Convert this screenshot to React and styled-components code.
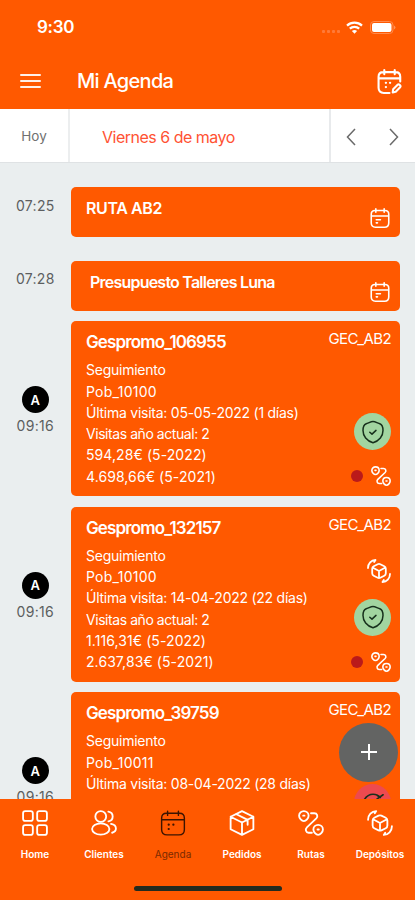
import React from "react";
import styled, { createGlobalStyle } from "styled-components";

const ORANGE = "#ff5900";

const visits = [
  {
    name: "Gespromo_106955",
    town: "Pob_10100",
    lastVisit: "Última visita: 05-05-2022 (1 días)",
    visitCount: "Visitas año actual: 2",
    amounts: ["594,28€ (5-2022)", "4.698,66€ (5-2021)"],
  },
  {
    name: "Gespromo_132157",
    town: "Pob_10100",
    lastVisit: "Última visita: 14-04-2022 (22 días)",
    visitCount: "Visitas año actual: 2",
    amounts: ["1.116,31€ (5-2022)", "2.637,83€ (5-2021)"],
    depot: true,
  },
  {
    name: "Gespromo_39759",
    town: "Pob_10011",
    lastVisit: "Última visita: 08-04-2022 (28 días)",
    amounts: [],
    late: true,
  },
];

const Icon = ({ size = 24, width = 1.5, children }) => (
  <svg
    width={size}
    height={size}
    viewBox="0 0 24 24"
    fill="none"
    stroke="currentColor"
    strokeWidth={width}
    strokeLinecap="round"
    strokeLinejoin="round"
  >
    {children}
  </svg>
);

const HomeIcon = (props) => (
  <Icon {...props}>
    <rect x="1" y="1" width="9" height="9" rx="2" />
    <rect x="14" y="1" width="9" height="9" rx="2" />
    <rect x="1" y="14" width="9" height="9" rx="2" />
    <rect x="14" y="14" width="9" height="9" rx="2" />
  </Icon>
);

const ClientsIcon = (props) => (
  <Icon {...props}>
    <circle cx="9" cy="6" r="5" />
    <ellipse cx="9" cy="17.5" rx="8" ry="5.2" />
    <path d="M16 1.500c2.400.4 4 2.200 4 4.500s-1.600 4.100-3.900 4.500M18.500 12.800c2.800.5 4.500 2 4.500 4.200 0 1.900-1.300 3.300-3.500 4" />
  </Icon>
);

const CalendarIcon = (props) => (
  <Icon {...props}>
    <path d="M7 1v4M17 1v4M6 3h12c2.800 0 4.500 1.800 4.500 4.500V18c0 3-1.700 5-5 5h-11c-3.300 0-5-2-5-5V7.500C1.500 4.800 3.200 3 6 3ZM1.800 9h20.400" />
    <path d="M8 13.500h.1M12.300 13.500h.1M8 17.500h.1" strokeWidth="2" />
  </Icon>
);

const SmallCalendarIcon = (props) => (
  <Icon {...props}>
    <path d="M7 1v4M17 1v4M6 3h12c2.800 0 4.500 1.800 4.500 4.500V18c0 3-1.700 5-5 5h-11c-3.300 0-5-2-5-5V7.500C1.500 4.800 3.200 3 6 3ZM1.800 9.500h20.400" />
    <path d="M7.500 14h5M7.500 17.800h1.500" />
  </Icon>
);

const CalendarEditIcon = (props) => (
  <Icon {...props}>
    <path d="M7 1v4M17 1v4M12 23H6.500c-3.300 0-5-2-5-5V7.500C1.500 4.800 3.200 3 6 3h12c2.800 0 4.300 1.800 4.300 4.500V12M1.800 9h20.400" />
    <path d="M8.500 13.300h.1M12.500 13.300h.1M8.500 17.300h.1" strokeWidth="2.2" />
    <path d="m15.500 19.500 4.300-4.300c1.200-1.200 3.600 1 2.400 2.300L18 21.800l-2.900.7.400-3Z" />
  </Icon>
);

const BoxIcon = (props) => (
  <Icon {...props}>
    <path d="M12 1 22.500 6.200v11.600L12 23 1.500 17.800V6.200L12 1ZM1.500 6.200 12 11.500l10.500-5.300M12 11.500V23M6.500 3.700l10.700 5.400v4.500" />
  </Icon>
);

const RouteIcon = (props) => (
  <Icon {...props}>
    <path d="M5.400 10.200C3.500 10.200 1 7.600 1 5.300 1 2.700 3 1 5.400 1s4.400 1.700 4.400 4.300c0 2.300-2.500 4.900-4.400 4.900ZM18.600 23c-1.900 0-4.400-2.600-4.400-4.900 0-2.600 2-4.300 4.400-4.300s4.400 1.700 4.400 4.300c0 2.300-2.500 4.900-4.400 4.900Z" />
    <path d="M4.800 5.200h1.200M18 18h1.200" />
    <path d="M12 3h3c2.800 0 3.700 3 1.900 4.800L8.200 16c-1.800 1.800-.9 5 1.600 5h3" />
  </Icon>
);

const DepotIcon = (props) => (
  <Icon {...props}>
    <path d="M10.700 5.200c.9-.4 1.700-.4 2.600 0l4 2c1 .5 1.500 1.400 1.500 2.500v4.600c0 1.100-.5 2-1.500 2.500l-4 2c-.9.4-1.700.4-2.600 0l-4-2c-1-.5-1.500-1.400-1.500-2.500V9.700c0-1.100.5-2 1.500-2.500l4-2ZM6 8.800l6 3.200 6-3.200M12 12v6.800" />
    <path d="M1 9C1 4.500 4.200 1.200 8.500 1L7.200 3M23 15c0 4.500-3.200 7.800-7.500 8l1.300-2" />
  </Icon>
);

const ShieldIcon = (props) => (
  <Icon {...props}>
    <path d="M12 1.500c1.800 0 4.500 1.500 6.800 2.300C21 4.700 22 7 22 10.500c0 5.500-3.700 10.500-10 12.200C5.700 21 2 16 2 10.500c0-3.500 1-5.800 3.200-6.700C7.500 3 10.200 1.500 12 1.500Z" />
    <path d="m8.800 12.200 2.200 1.900 4-3.700" />
  </Icon>
);

const LateIcon = (props) => (
  <Icon {...props}>
    <path d="M2.500 8.500C5 4.200 8 2.500 12 2.500c3.500 0 6.200 1.200 8 3.500M12 8.500v5M16.500 7.500 23 3M16.500 3.500 20 6" />
    <path d="M2.500 8.500a10 10 0 1 0 19 0" />
  </Icon>
);

const tabs = [
  { label: "Home", icon: HomeIcon },
  { label: "Clientes", icon: ClientsIcon },
  { label: "Agenda", icon: CalendarIcon, active: true },
  { label: "Pedidos", icon: BoxIcon },
  { label: "Rutas", icon: RouteIcon },
  { label: "Depósitos", icon: DepotIcon },
];

const App = () => {
  return (
    <>
      <GlobalStyle />
      <Screen>
        <StatusBar>
          <Clock>9:30</Clock>
          <StatusIcons>
            <Signal>
              <i />
              <i />
              <i />
              <i />
            </Signal>
            <svg width="17" height="13" viewBox="0 0 17 13" fill="none">
              <path
                d="M1 4.600a11 11 0 0 1 15 0M3.800 7.600a7 7 0 0 1 9.400 0"
                stroke="#fff"
                strokeWidth="2.200"
              />
              <path d="M5.900 10a4 4 0 0 1 5.200 0L8.500 12.800Z" fill="#fff" />
            </svg>
            <svg width="26" height="13" viewBox="0 0 26 13">
              <rect
                x="0.500"
                y="0.500"
                width="22.500"
                height="12"
                rx="3.500"
                fill="none"
                stroke="#ff8a4d"
              />
              <rect x="2" y="2" width="19.500" height="9" rx="2" fill="#fff" />
              <path d="M24.300 4.500q2 2 0 4z" fill="#ffac80" />
            </svg>
          </StatusIcons>
        </StatusBar>

        <Header>
          <Burger>
            <i />
            <i />
            <i />
          </Burger>
          <Title>Mi Agenda</Title>
          <CalendarEditIcon size={25} width={2} />
        </Header>

        <DateBar>
          <Today>Hoy</Today>
          <CurrentDate>Viernes 6 de mayo</CurrentDate>
          <Arrows>
            <svg width="10" height="18" viewBox="0 0 10 18" fill="none">
              <path d="M9 1 1.500 9 9 17" stroke="#6a6a6a" strokeWidth="1.500" />
            </svg>
            <svg width="10" height="18" viewBox="0 0 10 18" fill="none">
              <path d="m1 1 7.500 8L1 17" stroke="#6a6a6a" strokeWidth="1.500" />
            </svg>
          </Arrows>
        </DateBar>

        <Schedule>
          <Row $gap={24}>
            <TimeColumn $top={9.5}>
              <Time>07:25</Time>
            </TimeColumn>
            <TaskCard>
              <TaskName>RUTA AB2</TaskName>
              <SmallCalendarIcon size={20} width={1.9} />
            </TaskCard>
          </Row>
          <Row $gap={10.7}>
            <TimeColumn $top={9.5}>
              <Time>07:28</Time>
            </TimeColumn>
            <TaskCard>
              <TaskName $indent={4} $spacing={-0.78}>
                Presupuesto Talleres Luna
              </TaskName>
              <SmallCalendarIcon size={20} width={1.9} />
            </TaskCard>
          </Row>
          {visits.map((visit) => (
            <Row key={visit.name} $gap={10.7}>
              <TimeColumn $top={65}>
                <Avatar>A</Avatar>
                <Time>09:16</Time>
              </TimeColumn>
              <VisitCard>
                <VisitInfo>
                  <VisitName>{visit.name}</VisitName>
                  <Line>Seguimiento</Line>
                  <Line $spacing={0.25}>{visit.town}</Line>
                  <Line>{visit.lastVisit}</Line>
                  <Line $spacing={-0.44}>{visit.visitCount}</Line>
                  {visit.amounts.map((amount) => (
                    <Line key={amount} $spacing={0.08}>
                      {amount}
                    </Line>
                  ))}
                </VisitInfo>
                <VisitSide>
                  <Code>GEC_AB2</Code>
                  <DepotSlot>
                    {visit.depot && <DepotIcon size={24} width={1.8} />}
                  </DepotSlot>
                  <Badge $late={visit.late}>
                    {visit.late ? (
                      <LateIcon size={22} width={1.8} />
                    ) : (
                      <ShieldIcon size={24} width={1.5} />
                    )}
                  </Badge>
                  <VisitFooter>
                    <Dot />
                    <RouteIcon size={20} width={1.9} />
                  </VisitFooter>
                </VisitSide>
              </VisitCard>
            </Row>
          ))}
          <AddButton>
            <svg width="16" height="16" viewBox="0 0 16 16">
              <path d="M8 0v16M0 8h16" stroke="#fff" strokeWidth="2" />
            </svg>
          </AddButton>
        </Schedule>

        <TabBar>
          <Tabs>
            {tabs.map(({ label, icon: TabIcon, active }) => (
              <Tab key={label} $active={active}>
                <TabIcon size={26} width={active ? 1.3 : 1.7} />
                <span>{label}</span>
              </Tab>
            ))}
          </Tabs>
          <HomeIndicator />
        </TabBar>
      </Screen>
    </>
  );
};

const GlobalStyle = createGlobalStyle`
  * {
    box-sizing: border-box;
  }
  body {
    margin: 0;
    font-family: Inter, "Liberation Sans", sans-serif;
  }
  svg {
    display: block;
    flex: none;
  }
`;

const Screen = styled.div`
  display: flex;
  flex-direction: column;
  width: 415px;
  height: 900px;
  overflow: hidden;
  background: #eaeeef;
`;

const StatusBar = styled.div`
  display: flex;
  align-items: center;
  justify-content: space-between;
  height: 54px;
  padding: 0 19px 0 37px;
  background: ${ORANGE};
  color: white;
`;

const Clock = styled.div`
  font-size: 17px;
  font-weight: 600;
  letter-spacing: -0.3px;
`;

const StatusIcons = styled.div`
  display: flex;
  align-items: center;
  gap: 7px;
`;

const Signal = styled.div`
  display: flex;
  gap: 2px;
  margin: 8px -1px 0 0;

  i {
    width: 3px;
    height: 3px;
    border-radius: 1px;
    background: #ff7a38;
  }
`;

const Header = styled.header`
  display: flex;
  align-items: center;
  height: 55px;
  padding: 0 13px 1px 20px;
  background: ${ORANGE};
  color: white;
`;

const Burger = styled.div`
  display: flex;
  flex-direction: column;
  gap: 4px;
  width: 21px;
  margin-right: 36px;

  i {
    height: 2px;
    border-radius: 1px;
    background: #fff0e8;
  }
`;

const Title = styled.h1`
  flex: 1;
  margin: 0;
  font-size: 20px;
  font-weight: 500;
  letter-spacing: -0.7px;
`;

const DateBar = styled.div`
  display: flex;
  height: 54px;
  border-bottom: 1px solid #dfe2e4;
  background: white;
`;

const Today = styled.div`
  display: flex;
  align-items: center;
  justify-content: center;
  width: 70px;
  padding-top: 1px;
  border-right: 2px solid #eceeef;
  color: #707070;
  font-size: 13.5px;
`;

const CurrentDate = styled.div`
  display: flex;
  flex: 1;
  align-items: center;
  padding: 2px 0 0 32px;
  color: #ff5233;
  font-size: 16px;
  letter-spacing: -0.5px;
`;

const Arrows = styled.div`
  display: flex;
  align-items: center;
  justify-content: space-between;
  width: 86px;
  padding: 2px 16px 0 15px;
  border-left: 2px solid #e8eaec;
`;

const Schedule = styled.main`
  position: relative;
  flex: 1;
  min-height: 0;
  padding-top: 24px;
  overflow: hidden;
`;

const Row = styled.div`
  display: flex;
  margin-bottom: ${(props) => props.$gap}px;
`;

const TimeColumn = styled.div`
  display: flex;
  flex-direction: column;
  align-items: center;
  gap: 4px;
  width: 70.5px;
  padding-top: ${(props) => props.$top}px;
`;

const Time = styled.div`
  color: #5c5e60;
  font-size: 14px;
  line-height: 18px;
  letter-spacing: 0.3px;
`;

const Avatar = styled.div`
  display: flex;
  align-items: center;
  justify-content: center;
  width: 27px;
  height: 27px;
  border-radius: 50%;
  background: black;
  color: white;
  font-size: 13px;
  font-weight: 600;
`;

const Card = styled.div`
  display: flex;
  justify-content: space-between;
  width: 329px;
  border-radius: 5px;
  background: ${ORANGE};
  color: white;
`;

const TaskCard = styled(Card)`
  align-items: flex-end;
  height: 49.8px;
  padding: 0 9.5px 8.5px 15.5px;
`;

const TaskName = styled.div`
  align-self: flex-start;
  margin-top: 11px;
  padding-left: ${(props) => props.$indent ?? 0}px;
  font-size: 16px;
  font-weight: 600;
  line-height: 20px;
  letter-spacing: ${(props) => props.$spacing ?? -0.4}px;
`;

const VisitCard = styled(Card)`
  height: 174.9px;
  padding: 0 8.5px 0 15.5px;
`;

const VisitInfo = styled.div`
  padding-top: 11px;
  white-space: nowrap;
`;

const VisitName = styled.div`
  margin-bottom: 6px;
  font-size: 17px;
  font-weight: 600;
  line-height: 21px;
  letter-spacing: -0.87px;
`;

const Line = styled.div`
  font-size: 14px;
  line-height: 21.3px;
  letter-spacing: ${(props) => props.$spacing ?? -0.25}px;
`;

const VisitSide = styled.div`
  display: flex;
  flex-direction: column;
  align-items: flex-end;
  padding-top: 9px;
`;

const Code = styled.div`
  font-size: 15px;
  line-height: 18px;
  letter-spacing: -0.6px;
`;

const DepotSlot = styled.div`
  height: 24px;
  margin: 25px 0 16px;
`;

const Badge = styled.div`
  display: flex;
  align-items: center;
  justify-content: center;
  width: 37px;
  height: 37px;
  border-radius: 50%;
  background: ${(props) => (props.$late ? "#ed4a4f" : "#a2d5a0")};
  color: #17301c;
`;

const VisitFooter = styled.div`
  display: flex;
  align-items: center;
  gap: 8px;
  margin-top: 16px;
`;

const Dot = styled.div`
  width: 12px;
  height: 12px;
  border-radius: 50%;
  background: #ba1a1a;
`;

const AddButton = styled.button`
  position: absolute;
  right: 17px;
  bottom: 17.5px;
  display: flex;
  align-items: center;
  justify-content: center;
  width: 59px;
  height: 59px;
  padding: 0;
  border: 0;
  border-radius: 50%;
  background: #636463;
`;

const TabBar = styled.nav`
  height: 101px;
  background: ${ORANGE};
`;

const Tabs = styled.div`
  display: grid;
  grid-template-columns: repeat(6, 69px);
  height: 88px;
  padding: 11px 0 0 0.5px;
`;

const Tab = styled.div`
  display: flex;
  flex-direction: column;
  align-items: center;
  gap: 11px;
  color: ${(props) => (props.$active ? "#7a2a00" : "white")};
  font-size: 10px;
  font-weight: ${(props) => (props.$active ? 400 : 600)};
  line-height: 14px;
  white-space: nowrap;

  svg {
    color: ${(props) => (props.$active ? "#3d1400" : "white")};
  }
`;

const HomeIndicator = styled.div`
  width: 148px;
  height: 5px;
  margin: -1px auto 0;
  border-radius: 3px;
  background: #222b1f;
`;

export default App;
